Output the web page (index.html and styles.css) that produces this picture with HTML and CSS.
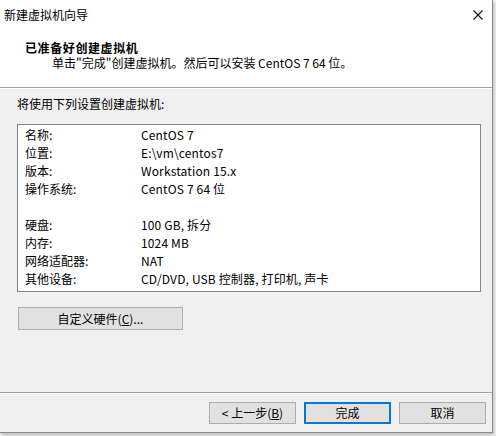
FILE: index.html
```html
<!DOCTYPE html>
<html lang="zh-CN">
<head>
<meta charset="utf-8">
<title>新建虚拟机向导</title>
<link rel="stylesheet" href="styles.css">
</head>
<body>
<div class="window">
  <div class="titlebar">
    <span class="title">新建虚拟机向导</span>
    <svg class="close" width="10" height="10" viewBox="0 0 10 10"><path d="M0.5 0.5 L9.5 9.5 M9.5 0.5 L0.5 9.5" stroke="#111" stroke-width="1.1" fill="none"/></svg>
  </div>
  <div class="header">
    <div class="h-title">已准备好创建虚拟机</div>
    <div class="h-sub">单击"完成"创建虚拟机。然后可以安装 CentOS 7 64 位。</div>
  </div>
  <div class="sep"></div>
  <div class="content">
    <div class="lead">将使用下列设置创建虚拟机:</div>
    <div class="summary">
      <div class="row"><span class="k">名称:</span><span class="v">CentOS 7</span></div>
      <div class="row"><span class="k">位置:</span><span class="v">E:\vm\centos7</span></div>
      <div class="row"><span class="k">版本:</span><span class="v">Workstation 15.x</span></div>
      <div class="row"><span class="k">操作系统:</span><span class="v">CentOS 7 64 位</span></div>
      <div class="row blank"></div>
      <div class="row"><span class="k">硬盘:</span><span class="v">100 GB, 拆分</span></div>
      <div class="row"><span class="k">内存:</span><span class="v">1024 MB</span></div>
      <div class="row"><span class="k">网络适配器:</span><span class="v">NAT</span></div>
      <div class="row"><span class="k">其他设备:</span><span class="v">CD/DVD, USB 控制器, 打印机, 声卡</span></div>
    </div>
    <button class="btn custom">自定义硬件(<u>C</u>)...</button>
  </div>
  <div class="sep"></div>
  <div class="footer">
    <button class="btn">&lt; 上一步(<u>B</u>)</button>
    <button class="btn default">完成</button>
    <button class="btn">取消</button>
  </div>
</div>
</body>
</html>
```
FILE: styles.css
```css
html, body {
  margin: 0;
  padding: 0;
}
body {
  background: #f4f4f4;
  width: 496px;
  height: 436px;
  overflow: hidden;
  font-family: "Noto Sans CJK SC", "Noto Sans", sans-serif;
  font-size: 12px;
  color: #000;
}
.window {
  width: 492px;
  height: 432px;
  background: #f0f0f0;
  border-right: 1px solid #8a8a8a;
  border-bottom: 1px solid #8a8a8a;
  display: flex;
  flex-direction: column;
  box-shadow: 1px 2px 4px rgba(0,0,0,0.25);
}
.titlebar {
  height: 30px;
  background: #fff;
  display: flex;
  align-items: center;
  justify-content: space-between;
  padding: 0 9px 0 4px;
  line-height: 18px;
}
.title {
  font-size: 12px;
}
.close {
  display: block;
}
.header {
  background: #fff;
  padding: 10px 0 17px 0;
  line-height: 15px;
}
.h-title {
  padding-left: 25px;
  font-weight: bold;
  letter-spacing: 0.6px;
  height: 15px;
}
.h-sub {
  padding-left: 52px;
  height: 15px;
}
.sep {
  height: 1px;
  background: #a0a0a0;
  border-bottom: 1px solid #fff;
}
.content {
  flex: 1;
  padding: 6px 0 0 17px;
  line-height: 18px;
}
.lead {
  height: 18px;
}
.summary {
  box-sizing: border-box;
  margin-top: 11px;
  width: 464px;
  height: 168px;
  background: #fff;
  border: 1px solid #828790;
  padding: 1px 0 0 7px;
}
.row {
  display: flex;
  height: 18px;
}
.k {
  width: 116px;
  flex: none;
}
.v {
  letter-spacing: 0.15px;
}
.btn {
  box-sizing: border-box;
  font-family: inherit;
  font-size: 12px;
  line-height: 18px;
  color: #000;
  background: #e1e1e1;
  border: 1px solid #adadad;
  padding: 0;
  margin: 0;
  height: 22px;
  width: 87px;
}
.btn u {
  text-decoration: underline;
  text-underline-offset: 1px;
}
.custom {
  display: block;
  margin: 15px 0 0 1px;
  width: 165px;
  height: 23px;
}
.footer {
  display: flex;
  justify-content: flex-end;
  gap: 8px;
  padding: 8px 6px 0 0;
  flex: none;
  height: 38px;
  box-sizing: border-box;
}
.default {
  border: 2px solid #0078d7;
}
```
